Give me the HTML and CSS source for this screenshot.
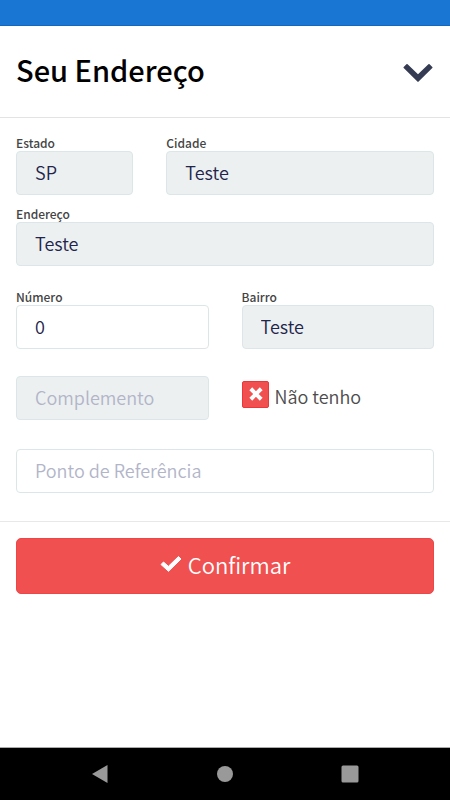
FILE: index.html
```html
<!DOCTYPE html>
<html lang="pt-BR">
<head>
<meta charset="utf-8">
<meta name="viewport" content="width=device-width, initial-scale=1">
<title>Seu Endereço</title>
<link rel="stylesheet" href="styles.css">
</head>
<body>
<div class="status-bar"></div>
<header class="header">
  <h1 class="title">Seu Endereço</h1>
  <button class="collapse" type="button" aria-label="Recolher">
    <svg viewBox="0 0 30 20" width="30" height="20"><path d="M4.6 1.2 15 11.2 25.4 1.2Q26 .6 26.6 1.2L29.3 3.9Q29.9 4.5 29.3 5.1L15.6 18.6Q15 19.2 14.4 18.6L.7 5.1Q.1 4.5.7 3.9L3.4 1.2Q4 .6 4.6 1.2Z"/></svg>
  </button>
</header>
<form class="form">
  <div class="fields">
    <div class="field third">
      <label for="estado">Estado</label>
      <input id="estado" type="text" value="SP" disabled>
    </div>
    <div class="field two-thirds">
      <label for="cidade">Cidade</label>
      <input id="cidade" type="text" value="Teste" disabled>
    </div>
    <div class="field full">
      <label for="endereco">Endereço</label>
      <input id="endereco" type="text" value="Teste" disabled>
    </div>
    <div class="field half spaced">
      <label for="numero">Número</label>
      <input id="numero" type="text" value="0">
    </div>
    <div class="field half spaced">
      <label for="bairro">Bairro</label>
      <input id="bairro" type="text" value="Teste" disabled>
    </div>
    <div class="field half unlabelled">
      <input type="text" placeholder="Complemento" aria-label="Complemento" disabled>
    </div>
    <div class="check half unlabelled">
      <span class="box">
        <input id="nao-tenho" type="checkbox" checked>
        <svg class="cross" viewBox="0 0 14 14" width="14" height="14"><path d="M3.2 3.2 10.8 10.8M10.8 3.2 3.2 10.8"/></svg>
      </span>
      <label for="nao-tenho">Não tenho</label>
    </div>
    <div class="field full reference">
      <input type="text" placeholder="Ponto de Referência" aria-label="Ponto de Referência">
    </div>
  </div>
  <div class="actions">
    <button class="confirm" type="submit">
      <svg viewBox="0 0 22 18" width="22" height="18"><path d="M3.5 7 8.4 11.3 18.5 1.5 21 4 8.5 16.3 1 9.5Z"/></svg>
      Confirmar
    </button>
  </div>
</form>
<nav class="nav-bar">
  <button type="button" aria-label="Voltar"><svg viewBox="0 0 18 18" width="18" height="18"><path d="M1 9 16.5 0V18Z"/></svg></button>
  <button type="button" aria-label="Início"><svg viewBox="0 0 18 18" width="18" height="18"><circle cx="9" cy="9" r="8"/></svg></button>
  <button type="button" aria-label="Recentes"><svg viewBox="0 0 18 18" width="18" height="18"><rect x=".5" y=".5" width="17" height="17" rx="1.5"/></svg></button>
</nav>
</body>
</html>
```
FILE: styles.css
```css
* {
  box-sizing: border-box;
}

body {
  margin: 0;
  min-height: 100vh;
  display: flex;
  flex-direction: column;
  background: #fff;
  color: #000;
  font-family: "Noto Sans CJK JP", "Noto Sans", sans-serif;
}

button,
input {
  font: inherit;
}

button {
  border: 0;
  padding: 0;
  background: none;
}

svg {
  display: block;
}

.status-bar {
  height: 26px;
  background: #1976d3;
  border-bottom: 1px solid #1268c0;
}

.header {
  display: flex;
  align-items: flex-end;
  justify-content: space-between;
  padding: 20px 17px 25px 16px;
  border-bottom: 1px solid #e3e3e3;
}

.title {
  margin: 0;
  font-size: 29px;
  font-weight: 500;
  line-height: 46px;
}

.collapse {
  margin-bottom: 9px;
  fill: #343b52;
}

.fields {
  display: grid;
  grid-template-columns: repeat(12, 1fr);
  column-gap: 33px;
  padding: 17px 16px 28px;
}

.third {
  grid-column: span 4;
}

.two-thirds {
  grid-column: span 8;
}

.half {
  grid-column: span 6;
}

.full {
  grid-column: span 12;
  margin-top: 11px;
}

.spaced {
  margin-top: 23px;
}

.unlabelled {
  margin-top: 27px;
}

.reference {
  margin-top: 29px;
}

.field label {
  display: block;
  padding-bottom: 1px;
  font-size: 12px;
  font-weight: 500;
  line-height: 15px;
  color: #444;
}

.field input {
  display: block;
  width: 100%;
  height: 44px;
  padding: 0 18px 2px;
  border: 1px solid #dce6e8;
  border-radius: 4px;
  background: #fff;
  color: #23244a;
  font-size: 18px;
  font-weight: 350;
}

.field input:disabled {
  background: #ecf0f1;
}

.field input::placeholder {
  color: #b2b5c8;
  opacity: 1;
}

.check {
  display: flex;
  align-items: flex-start;
  gap: 6px;
  padding-top: 5px;
  font-size: 18px;
  font-weight: 350;
  line-height: 30px;
  color: #4c4c4c;
}

.box {
  position: relative;
}

.box input {
  display: block;
  appearance: none;
  width: 27px;
  height: 27px;
  margin: 0;
  border: 1px solid #ee3537;
  border-radius: 2px;
  background: #f05050;
}

.cross {
  position: absolute;
  top: 6px;
  left: 7px;
  fill: none;
  stroke: #fff;
  stroke-width: 4;
  stroke-linecap: square;
  pointer-events: none;
}

.actions {
  padding: 16px;
  border-top: 1px solid #e8e8e8;
}

.confirm {
  display: flex;
  align-items: center;
  justify-content: center;
  gap: 6px;
  width: 100%;
  height: 56px;
  padding-bottom: 4px;
  border: 1px solid #ee4647;
  border-radius: 5px;
  background: #f05050;
  color: #fff;
  font-size: 22px;
  font-weight: 350;
}

.confirm svg {
  fill: #fff;
  stroke: #fff;
  stroke-width: 1;
  stroke-linejoin: round;
}

.nav-bar {
  display: flex;
  align-items: center;
  justify-content: space-around;
  height: 53px;
  margin-top: auto;
  padding: 0 38px;
  border-top: 1px solid #aaa;
  background: #000;
  fill: #999;
}
```
